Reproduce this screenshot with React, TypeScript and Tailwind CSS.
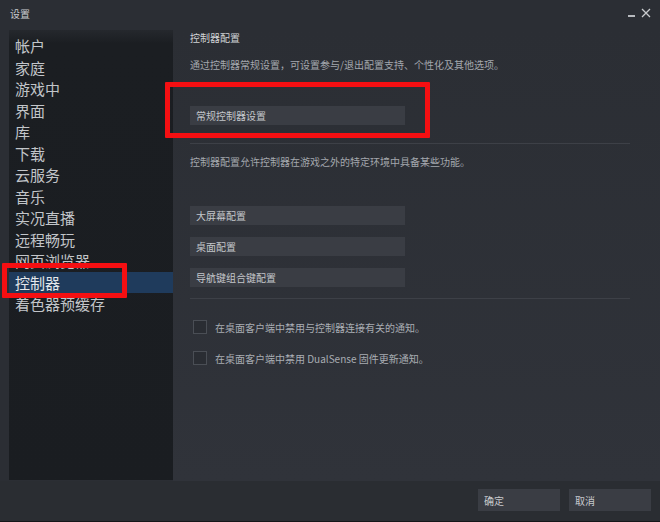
import React from 'react';

const navItems = [
  '帐户', '家庭', '游戏中', '界面', '库', '下载', '云服务', '音乐',
  '实况直播', '远程畅玩', '网页浏览器', '控制器', '着色器预缓存',
];

function ActionButton({ label, className = '' }: { label: string; className?: string }) {
  return (
    <div className={`w-[215px] h-[19px] bg-[#3a3d44] flex items-center px-[6px] text-[10px] text-[#c3c6ca] ${className}`}>
      {label}
    </div>
  );
}

function Checkbox({ label }: { label: string }) {
  return (
    <div className="flex items-center gap-[8px] h-[14px] pl-[3px]">
      <div className="w-[14px] h-[14px] border border-[#4a4e55] bg-[#2a2d33]" />
      <span className="text-[10px] text-[#a9adb3]">{label}</span>
    </div>
  );
}

export default function App() {
  return (
    <div className="w-[660px] h-[522px] bg-[#2b2e34] relative flex flex-col overflow-hidden font-['Noto_Sans_CJK_SC','Noto_Sans',sans-serif] border-b border-[#15171a]">
      {/* title bar */}
      <div className="h-[30px] flex items-start justify-between pl-[10px] pr-[9px] pt-[6px]">
        <span className="text-[10px] text-[#c8cacd]">设置</span>
        <div className="flex items-end gap-[6px] text-[#c8cacd]">
          <div className="w-[7px] h-[2px] bg-[#b7babe] mb-[1px]" />
          <svg width="10" height="10" viewBox="0 0 10 10" className="mt-[2px]">
            <path d="M1 1 L9 9 M9 1 L1 9" stroke="#c8cacd" strokeWidth="1.3" />
          </svg>
        </div>
      </div>

      <div className="flex flex-1 min-h-0">
        {/* sidebar */}
        <div className="ml-[9px] w-[164px] h-[450px] bg-[#1b1e22] pt-[5px] bg-gradient-to-b from-[#25282d] via-[#1b1e22] via-[3%] to-[#1a1d21]">
          {navItems.map((item) => (
            <div
              key={item}
              className={`h-[21.5px] flex items-center pl-[6px] text-[15px] leading-none ${
                item === '控制器' ? 'bg-[#1f3b5c] text-[#e4e7ea]' : 'text-[#c2c5c9]'
              }`}
            >
              {item}
            </div>
          ))}
        </div>

        {/* main */}
        <div className="flex-1 h-[452px] bg-gradient-to-b from-[#2b2e34] to-[#30333a] pl-[17px] pr-[30px]">
          <div className="text-[10px] text-[#d0d2d5] pt-[1px] leading-[14px]">控制器配置</div>
          <div className="text-[10px] text-[#a3a7ad] mt-[13px] leading-[14px]">
            通过控制器常规设置，可设置参与/退出配置支持、个性化及其他选项。
          </div>
          <ActionButton label="常规控制器设置" className="mt-[34px]" />
          <div className="h-px bg-[#3d4047] mt-[18px] w-[440px]" />
          <div className="text-[10px] text-[#a3a7ad] mt-[11px] leading-[14px]">
            控制器配置允许控制器在游戏之外的特定环境中具备某些功能。
          </div>
          <ActionButton label="大屏幕配置" className="mt-[37px]" />
          <ActionButton label="桌面配置" className="mt-[12px]" />
          <ActionButton label="导航键组合键配置" className="mt-[12px]" />
          <div className="h-px bg-[#3d4047] mt-[11px] w-[440px]" />
          <div className="flex flex-col gap-[17px] mt-[21px]">
            <Checkbox label="在桌面客户端中禁用与控制器连接有关的通知。" />
            <Checkbox label="在桌面客户端中禁用 DualSense 固件更新通知。" />
          </div>
        </div>
      </div>

      {/* footer */}
      <div className="h-[40px] flex justify-end items-start gap-[9px] pr-[9px] pt-[8px] bg-[#2a2d32]">
        <div className="w-[82px] h-[22px] bg-[#3a3d44] flex items-center pl-[6px] text-[10px] text-[#c8cacd]">确定</div>
        <div className="w-[82px] h-[22px] bg-[#3a3d44] flex items-center pl-[6px] text-[10px] text-[#c8cacd]">取消</div>
      </div>

      {/* red annotation boxes */}
      <div className="absolute left-[165px] top-[82px] w-[265px] h-[56px] border-[5px] border-[#f50f12] rounded-[1px]" />
      <div className="absolute left-[2px] top-[263px] w-[125px] h-[35px] border-[5px] border-[#f50f12] rounded-[1px]" />
    </div>
  );
}
